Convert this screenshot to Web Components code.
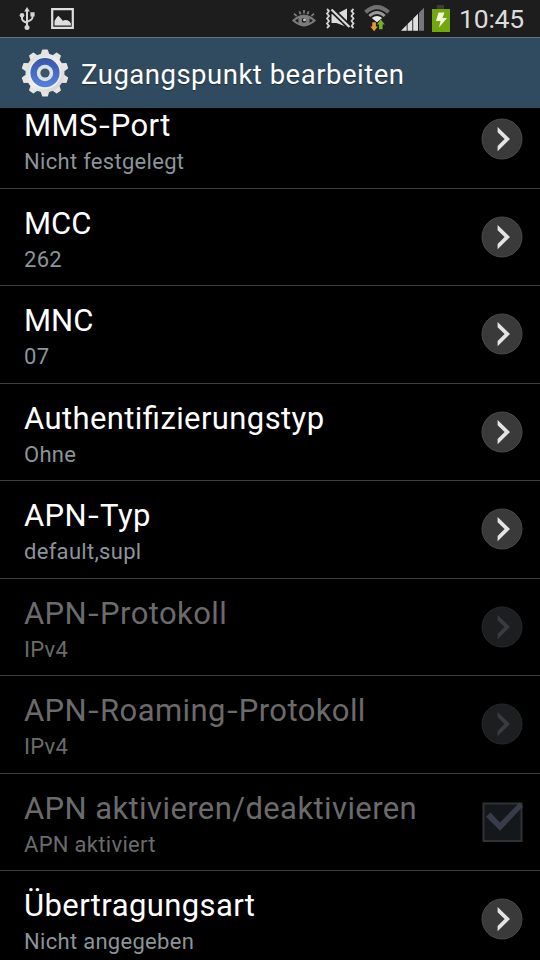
<!DOCTYPE html>
<html lang="de">
<head>
<meta charset="UTF-8">
<title>Zugangspunkt bearbeiten</title>
<style>
  html, body {
    margin: 0;
    height: 100%;
    background: #000;
    overflow: hidden;
  }
</style>
</head>
<body>
<settings-screen></settings-screen>

<script>
class StatusBar extends HTMLElement {
  constructor() {
    super();
    this.attachShadow({ mode: "open" });
  }

  connectedCallback() {
    this.shadowRoot.innerHTML = `
      <style>
        :host {
          display: flex;
          align-items: center;
          justify-content: space-between;
          height: 37px;
          box-sizing: border-box;
          padding: 0 16px 0 16px;
          background: #1d1d1d;
          color: #dcdcdc;
        }
        .group {
          display: flex;
          align-items: center;
          height: 37px;
        }
        svg { display: block; flex: none; }
        .time {
          font-size: 26.5px;
          line-height: 36px;
          width: 65px;
          white-space: nowrap;
          letter-spacing: -0.2px;
        }
      </style>
      <div class="group">
        <svg width="64" height="37" viewBox="16 0 64 37">
          <!-- usb -->
          <g fill="none" stroke="#d4d4d4" stroke-width="2">
            <path d="M27 11V27M22 16v2.500q0 2.500 5 4.300M32.500 15v2.300q0 2.600-5.500 4.600"/>
          </g>
          <path d="M27 7l2.800 4.500h-5.600z" fill="#d4d4d4"/>
          <circle cx="22" cy="15.200" r="2.300" fill="#d4d4d4"/>
          <path d="M30.400 12.200h4.200v4.200h-4.200z" fill="#d4d4d4"/>
          <circle cx="27" cy="27.600" r="2.500" fill="#d4d4d4"/>
          <!-- screenshot -->
          <path d="M52.200 9.200h20.600v18.600H52.200z" fill="none" stroke="#dedede" stroke-width="2.200"/>
          <path d="M54.500 25.500v-4.500l1.800-3 2-2.200 2.200 2.200 2.300 2.800 2.200-.8 2.500.3 2 1.200 1.400 2v2z" fill="#dedede"/>
        </svg>
      </div>
      <div class="group">
        <svg width="168" height="37" viewBox="291 0 168 37">
          <!-- eye -->
          <g fill="none" stroke="#7c7c7c">
            <path d="M293.500 20.500q10.500-9 21 0q-10.500 9.500-21 0z" stroke-width="2.200"/>
            <circle cx="304" cy="20.400" r="4" stroke-width="3.400"/>
            <path d="M294 13.600l2.700 2.500M299.300 11.300l1.400 3M304 10v3.500M308.700 11.300l-1.400 3M314 13.600l-2.700 2.500" stroke-width="1.800"/>
          </g>
          <circle cx="304.500" cy="19.700" r="1.500" fill="#c4c4c4"/>
          <!-- vibrate, sound muted -->
          <g fill="none" stroke="#d4d4d4" stroke-width="1.800">
            <path d="M327 9l2 2-2 2.500 2 2.500-2 2.500 2 2.500-2 2.500 2 2.500-2 2M353.500 9l-2 2 2 2.500-2 2.500 2 2.500-2 2.500 2 2.500-2 2.500 2 2"/>
          </g>
          <path d="M331.500 14h5l10.500-5.500V27L336.500 23h-5z" fill="#dcdcdc"/>
          <path d="M331.500 9.500l18 17.500" stroke="#1d1d1d" stroke-width="5.500"/>
          <path d="M331.500 9.500l18 17.500" stroke="#dcdcdc" stroke-width="2.200"/>
          <!-- wifi -->
          <g fill="none">
            <path d="M365.500 12.300q11.500-10.500 23 0" stroke="#707070" stroke-width="4"/>
            <path d="M369.300 16q7.700-7 15.400 0" stroke="#9a9a9a" stroke-width="3"/>
          </g>
          <path d="M371.800 18q5.200-4 10.400 0l-5.200 4.200z" fill="#e8e8e8"/>
          <path d="M372.300 22.300h3.600v4.200h2l-3.800 4.800-3.800-4.800h2z" fill="#e39a3c"/>
          <path d="M379 29.300v-4.700h-2.200l4-5 4 5h-2.200v4.700z" fill="#72b51e"/>
          <!-- signal -->
          <path d="M401 30.700l5.700-5.700v5.700zM407.600 30.700v-6.600l4.700-4.700v11.300zM413.200 30.700v-12.200l4.800-4.800v17z" fill="#e0e0e0"/>
          <path d="M419 30.700V12.700l5-5v23z" fill="#777"/>
          <!-- battery, charging -->
          <path d="M437 5h7v4h-7z" fill="#3c3c3c"/>
          <path d="M432 9h18v23h-18z" fill="#72a70d"/>
          <path d="M438.500 12.500h6l-2 5.500h4.500l-8 9.500 1.500-6.500h-4.500z" fill="#f0f5dc"/>
        </svg>
        <span class="time"><slot></slot></span>
      </div>
    `;
  }
}

class TitleBar extends HTMLElement {
  constructor() {
    super();
    this.attachShadow({ mode: "open" });
  }

  connectedCallback() {
    // ten teeth, evenly spread round the hub
    let teeth = "";
    for (let i = 0; i < 10; i++) {
      teeth += `<path d="M20 7L21.800 1.200h4.400L28 7z" transform="rotate(${i * 36} 24 24)"/>`;
    }
    this.shadowRoot.innerHTML = `
      <style>
        :host {
          display: flex;
          align-items: center;
          height: 71px;
          box-sizing: border-box;
          padding-left: 20.500px;
          background: #304b5f;
          border-top: 1px solid #5f7585;
          color: #fff;
        }
        svg { display: block; flex: none; }
        .title {
          margin: 3px 0 0 12.500px;
          font-size: 27.500px;
          line-height: 36px;
          white-space: nowrap;
          letter-spacing: 0.5px;
          text-shadow: 0 1px 1px rgba(0, 0, 0, 0.4);
        }
      </style>
      <svg width="48" height="48" viewBox="0 0 48 48">
        <defs>
          <linearGradient id="metal" x1="0" y1="0" x2="1" y2="1">
            <stop offset="0" stop-color="#d9d8d6"/>
            <stop offset="0.5" stop-color="#efeeec"/>
            <stop offset="1" stop-color="#cfcecc"/>
          </linearGradient>
          <linearGradient id="blue" x1="0" y1="0" x2="0" y2="1">
            <stop offset="0" stop-color="#3655a6"/>
            <stop offset="1" stop-color="#5682dc"/>
          </linearGradient>
        </defs>
        <g fill="#e6e5e2" stroke="#e6e5e2" stroke-width="1.500" stroke-linejoin="round">${teeth}</g>
        <circle cx="24" cy="24" r="19.500" fill="url(#metal)"/>
        <circle cx="24" cy="24" r="15.800" fill="#eef1f6"/>
        <circle cx="24" cy="23.700" r="14.600" fill="url(#blue)"/>
        <circle cx="24" cy="24" r="8.200" fill="#dde1e6"/>
        <circle cx="24" cy="24" r="4.600" fill="#3d5568"/>
      </svg>
      <span class="title"><slot></slot></span>
    `;
  }
}

class ArrowButton extends HTMLElement {
  constructor() {
    super();
    this.attachShadow({ mode: "open" });
  }

  connectedCallback() {
    const off = this.hasAttribute("disabled");
    this.shadowRoot.innerHTML = `
      <style>
        :host { display: block; width: 42px; height: 42px; }
        svg { display: block; }
      </style>
      <svg width="42" height="42" viewBox="0 0 42 42">
        <circle cx="21" cy="21" r="20" fill="${off ? "#1d1e1f" : "#3a3a3a"}" stroke="${off ? "#272829" : "#4a4a4a"}"/>
        <path d="M16.600 9v5.200l7 6.900-7 7v5.200l12.400-12.200z" fill="${off ? "#393b40" : "#e4e4e4"}"/>
      </svg>
    `;
  }
}

class CheckBox extends HTMLElement {
  constructor() {
    super();
    this.attachShadow({ mode: "open" });
  }

  connectedCallback() {
    this.shadowRoot.innerHTML = `
      <style>
        :host { display: block; width: 42px; height: 42px; }
        svg { display: block; }
      </style>
      <svg width="42" height="42" viewBox="0 0 42 42">
        <path d="M2.500 2.500h38v37.500h-38z" fill="#14181b" stroke="#303334" stroke-width="2"/>
        <path d="M5 15.800l4.500-4.300 9.500 10L38.500 1.500l3.500 4L19 29.800z" fill="#383c48"/>
      </svg>
    `;
  }
}

class PreferenceRow extends HTMLElement {
  constructor() {
    super();
    this.attachShadow({ mode: "open" });
  }

  connectedCallback() {
    const off = this.hasAttribute("disabled") ? "disabled" : "";
    const widget = this.getAttribute("widget") === "check"
      ? "<check-box></check-box>"
      : `<arrow-button ${off}></arrow-button>`;
    this.shadowRoot.innerHTML = `
      <style>
        :host {
          display: flex;
          flex: none;
          align-items: center;
          justify-content: space-between;
          height: 97.5px;
          box-sizing: border-box;
          padding: 0 16.500px 0 24px;
          border-bottom: 1px solid #3c3c3c;
          color: #fff;
          letter-spacing: 0.4px;
        }
        .text {
          align-self: flex-start;
          padding-top: 14.900px;
          white-space: nowrap;
        }
        .label {
          font-size: 31px;
          line-height: 40px;
          font-feature-settings: "liga" 1;
        }
        .summary {
          margin-top: 2px;
          font-size: 22px;
          line-height: 28px;
          letter-spacing: 0.3px;
          color: #8c9499;
        }
        :host([disabled]) { color: #6b6b6b; }
        :host([disabled]) .summary { color: #6b6b6b; }
        arrow-button, check-box { margin: 0 0.500px 1px 0; }
      </style>
      <div class="text">
        <div class="label"><slot></slot></div>
        <div class="summary"><slot name="summary"></slot></div>
      </div>
      ${widget}
    `;
  }
}

class SettingsScreen extends HTMLElement {
  constructor() {
    super();
    this.attachShadow({ mode: "open" });
  }

  connectedCallback() {
    this.shadowRoot.innerHTML = `
      <style>
        :host {
          display: flex;
          flex-direction: column;
          width: 540px;
          height: 960px;
          overflow: hidden;
          background: #000;
          font-family: Roboto, "Noto Sans", sans-serif;
        }
        status-bar, title-bar { flex: none; }
        /* the list is scrolled a little past its first row's top */
        .list {
          flex: 1;
          min-height: 0;
          display: flex;
          flex-direction: column;
          overflow: hidden;
        }
        .list preference-row:first-child { margin-top: -16.750px; }
        .tight { letter-spacing: 0; }
        /* wide hyphen */
        b {
          display: inline-block;
          font-weight: 400;
          margin: 0 2px;
          transform: scaleX(1.25);
        }
      </style>
      <status-bar>10:45</status-bar>
      <title-bar>Zugangspunkt bearbeiten</title-bar>
      <div class="list">
        <preference-row>MMS<b>-</b>Port<span slot="summary">Nicht festgelegt</span></preference-row>
        <preference-row class="tight">MCC<span slot="summary">262</span></preference-row>
        <preference-row class="tight">MNC<span slot="summary">07</span></preference-row>
        <preference-row>Authentifizierungstyp<span slot="summary">Ohne</span></preference-row>
        <preference-row>APN<b>-</b>Typ<span slot="summary">default,supl</span></preference-row>
        <preference-row disabled>APN<b>-</b>Protokoll<span slot="summary">IPv4</span></preference-row>
        <preference-row disabled>APN<b>-</b>Roaming<b>-</b>Protokoll<span slot="summary">IPv4</span></preference-row>
        <preference-row disabled widget="check">APN aktivieren/deaktivieren<span slot="summary">APN aktiviert</span></preference-row>
        <preference-row>Übertragungsart<span slot="summary">Nicht angegeben</span></preference-row>
      </div>
    `;
  }
}

customElements.define("status-bar", StatusBar);
customElements.define("title-bar", TitleBar);
customElements.define("arrow-button", ArrowButton);
customElements.define("check-box", CheckBox);
customElements.define("preference-row", PreferenceRow);
customElements.define("settings-screen", SettingsScreen);
</script>
</body>
</html>
